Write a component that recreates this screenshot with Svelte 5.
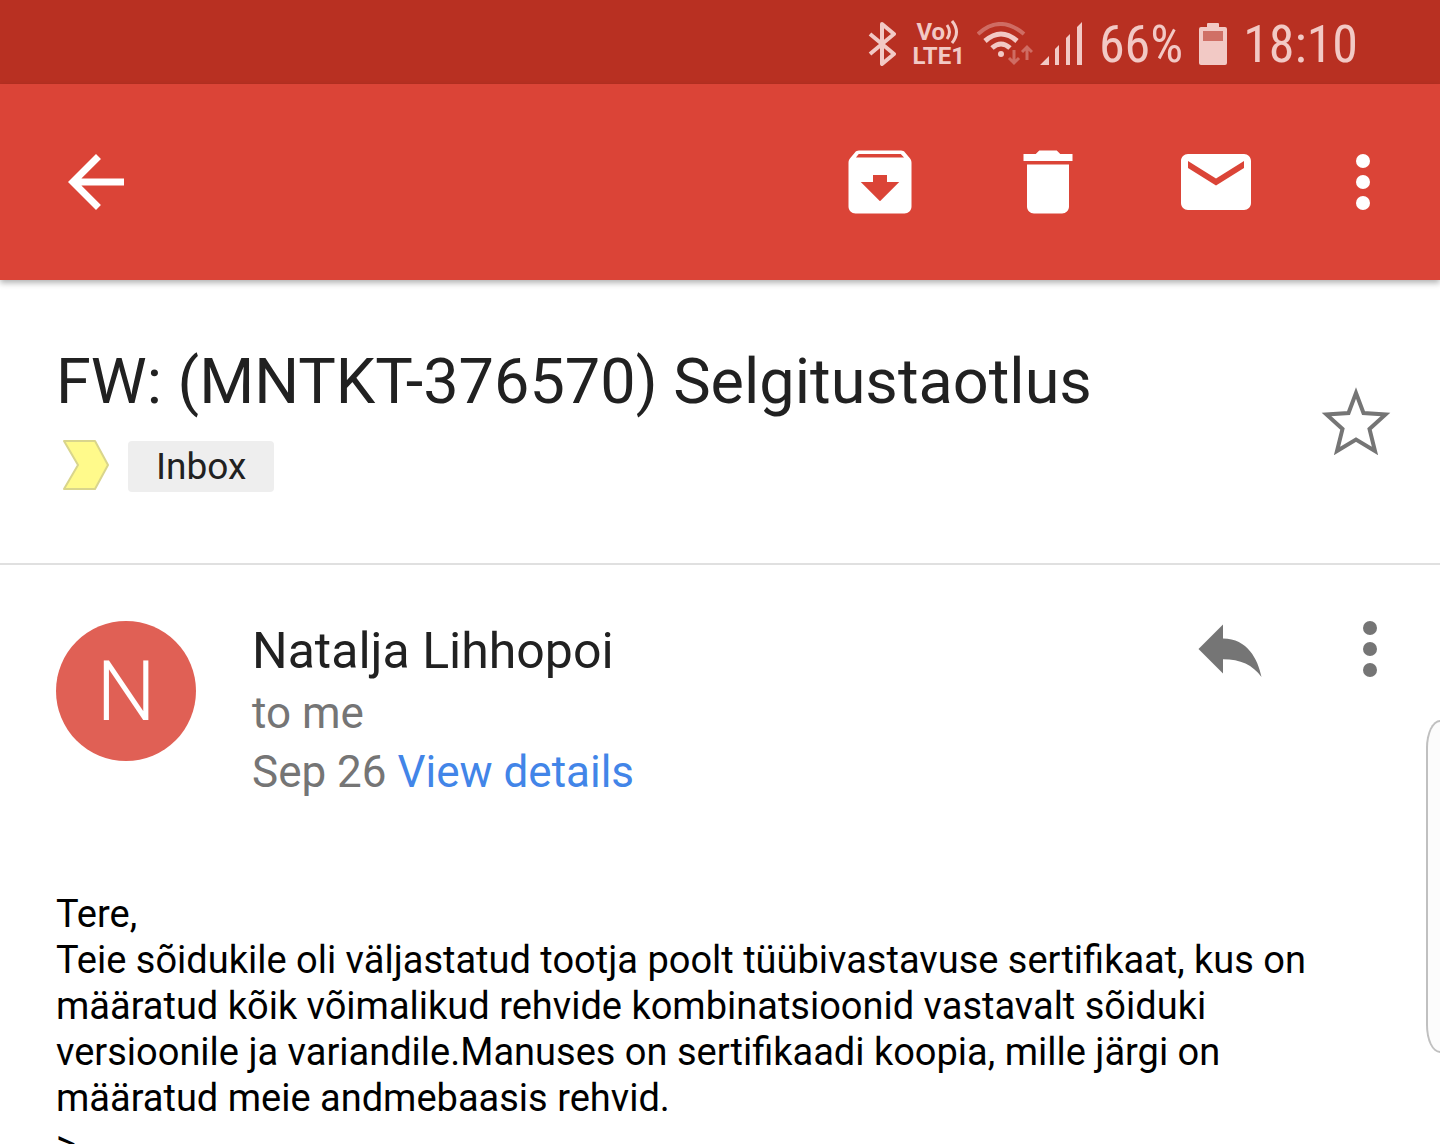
<script>
	let starred = $state(false);

	const subject = 'FW: (MNTKT-376570) Selgitustaotlus';
	const sender = 'Natalja Lihhopoi';
	const battery = 66;

	const actions = [
		{
			label: 'Archive',
			path: 'M20.54 5.23l-1.39-1.68C18.88 3.21 18.47 3 18 3H6c-.47 0-.88.21-1.16.55L3.46 5.23C3.17 5.57 3 6.02 3 6.5V19c0 1.1.9 2 2 2h14c1.1 0 2-.9 2-2V6.5c0-.48-.17-.93-.46-1.27zM12 17.5L6.5 12H10v-2h4v2h3.5L12 17.5zM5.12 5l.81-1h12l.94 1H5.12z'
		},
		{
			label: 'Delete',
			path: 'M6 19c0 1.1.9 2 2 2h8c1.1 0 2-.9 2-2V7H6v12zM19 4h-3.5l-1-1h-5l-1 1H5v2h14V4z'
		},
		{
			label: 'Mark unread',
			path: 'M20 4H4c-1.1 0-2 .9-2 2v12c0 1.1.9 2 2 2h16c1.1 0 2-.9 2-2V6c0-1.1-.9-2-2-2zm0 4l-8 5-8-5V6l8 5 8-5v2z'
		}
	];
</script>

{#snippet dots()}
	<svg viewBox="0 0 24 24" fill="currentColor">
		<circle cx="12" cy="6" r="2" />
		<circle cx="12" cy="12" r="2" />
		<circle cx="12" cy="18" r="2" />
	</svg>
{/snippet}

<div class="app">
	<div class="status-bar">
		<svg class="bluetooth" viewBox="0 0 28 44">
			<path
				d="M2 12l24 20-12 10V2l12 10L2 32"
				fill="none"
				stroke="currentColor"
				stroke-width="4"
				stroke-linejoin="round"
			/>
		</svg>
		<div class="volte">
			<div class="vo">
				<span>Vo</span>
				<svg viewBox="0 0 14 24" fill="none" stroke="currentColor" stroke-width="3">
					<path d="M2 5q5 7 0 14M7 1q9 11 0 22" />
				</svg>
			</div>
			<div>LTE1</div>
		</div>
		<div class="network">
			<svg class="wifi" viewBox="0 0 56 44" fill="none" stroke="currentColor">
				<path d="M1 12q22-20 46 0" stroke-width="4" opacity="0.4" />
				<path d="M8 19q16-14 32 0" stroke-width="5" />
				<path d="M15 26q9-8 18 0" stroke-width="5" />
				<circle cx="24" cy="32" r="3" fill="currentColor" stroke="none" />
				<path
					d="M37 28v13M32 36l5 5 5-5M50 38V25M45 30l5-5 5 5"
					stroke-width="3"
					opacity="0.4"
				/>
			</svg>
			<svg class="signal" viewBox="0 0 44 44" fill="currentColor">
				<path d="M1 43l9-9v9zM16 27l4-4v20h-4zM27 16l4-4v31h-4zM38 5l5-5v43h-5z" />
			</svg>
		</div>
		<span class="reading">{battery}%</span>
		<svg class="battery" viewBox="0 0 28 44" fill="currentColor">
			<path d="M8 5V2q0-1 1-1h10q1 0 1 1v3h6q2 0 2 2v34q0 2-2 2H2q-2 0-2-2V7q0-2 2-2z" />
			<path class="drained" d="M4 9h20v10H4z" />
		</svg>
		<time class="reading">18:10</time>
	</div>

	<header class="toolbar">
		<button class="icon-button back" aria-label="Navigate up">
			<svg viewBox="0 0 24 24" fill="currentColor">
				<path d="M20 11H7.83l5.59-5.59L12 4l-8 8 8 8 1.41-1.41L7.83 13H20v-2z" />
			</svg>
		</button>
		<div class="actions">
			{#each actions as action}
				<button class="icon-button" aria-label={action.label}>
					<svg viewBox="0 0 24 24" fill="currentColor"><path d={action.path} /></svg>
				</button>
			{/each}
		</div>
		<button class="icon-button" aria-label="More options">{@render dots()}</button>
	</header>

	<main>
		<section class="subject">
			<div class="subject-text">
				<h1>{subject}</h1>
				<div class="labels">
					<svg class="importance" viewBox="0 0 48 52">
						<path
							d="M2 1h31l13 24-13 24H2l14-24z"
							fill="#fffa8b"
							stroke="#d9d58c"
							stroke-width="2"
							stroke-linejoin="round"
						/>
					</svg>
					<span class="chip">Inbox</span>
				</div>
			</div>
			<button
				class="icon-button star"
				aria-label="Star"
				aria-pressed={starred}
				onclick={() => (starred = !starred)}
			>
				<svg viewBox="0 0 84 84">
					<path
						d="M42 17L49.5 37L71.5 38.5L55.5 53L61 75L42 63.5L23 75L28.5 53L12.5 38.5L34.5 37z"
						fill={starred ? 'currentColor' : 'none'}
						stroke="currentColor"
						stroke-width="4"
					/>
				</svg>
			</button>
		</section>

		<article>
			<div class="message-head">
				<div class="avatar">N</div>
				<div class="details">
					<div class="sender">{sender}</div>
					<div class="meta">to me</div>
					<div class="meta">Sep 26 <a href="#details">View details</a></div>
				</div>
				<div class="message-actions">
					<button class="icon-button" aria-label="Reply">
						<svg viewBox="0 0 24 24" fill="currentColor">
							<path d="M10 9V5l-7 7 7 7v-4.1c5 0 8.5 1.6 11 5.1-1-5-4-11-11-11z" />
						</svg>
					</button>
					<button class="icon-button" aria-label="Message options">{@render dots()}</button>
				</div>
			</div>
			<div class="body">
				<p>Tere,</p>
				<p>
					Teie sõidukile oli väljastatud tootja poolt tüübivastavuse sertifikaat, kus on määratud
					kõik võimalikud rehvide kombinatsioonid vastavalt sõiduki versioonile ja
					variandile.Manuses on sertifikaadi koopia, mille järgi on määratud meie andmebaasis
					rehvid.
				</p>
				<p>&gt;</p>
			</div>
		</article>
	</main>

	<div class="edge-handle"></div>
</div>

<style>
	:global(body) {
		margin: 0;
		background: #fff;
	}

	.app {
		position: relative;
		display: flex;
		flex-direction: column;
		height: 100vh;
		overflow: hidden;
		font-family: Roboto, sans-serif;
		color: #212121;
	}

	svg {
		display: block;
		flex: none;
	}

	.status-bar {
		display: flex;
		flex: none;
		align-items: center;
		justify-content: flex-end;
		gap: 16px;
		height: 84px;
		padding: 4px 82px 0 0;
		box-sizing: border-box;
		background: #b83022;
		color: #f2c9c5;
	}

	.bluetooth,
	.battery {
		width: 28px;
		height: 44px;
	}

	.drained {
		fill: #d07066;
	}

	.volte {
		font-size: 24px;
		font-weight: 700;
		line-height: 24px;
	}

	.vo {
		display: flex;
		align-items: center;
		padding-left: 4px;
	}

	.vo svg {
		width: 14px;
		height: 24px;
	}

	.network {
		display: flex;
		gap: 6px;
		margin-left: -4px;
	}

	.wifi {
		width: 56px;
		height: 44px;
	}

	.signal {
		width: 44px;
		height: 44px;
	}

	.reading {
		padding-top: 2px;
		font-family: 'Roboto Condensed', 'Liberation Sans Narrow', Roboto, sans-serif;
		font-size: 52px;
		line-height: 64px;
	}

	.toolbar {
		position: relative;
		display: flex;
		flex: none;
		align-items: center;
		height: 196px;
		padding: 0 35px 0 54px;
		box-sizing: border-box;
		background: #db4437;
		color: #fff;
		box-shadow: 0 3px 6px rgba(0, 0, 0, 0.3);
	}

	.icon-button {
		flex: none;
		width: 84px;
		height: 84px;
		padding: 0;
		border: none;
		background: none;
		color: inherit;
		cursor: pointer;
	}

	.icon-button svg {
		width: 84px;
		height: 84px;
	}

	.back {
		margin-right: auto;
	}

	.actions {
		display: flex;
		gap: 84px;
		margin-right: 63px;
	}

	main {
		flex: 1;
		min-height: 0;
		overflow: hidden;
	}

	.subject {
		display: flex;
		align-items: center;
		justify-content: space-between;
		padding: 64px 42px 71px 56px;
		border-bottom: 2px solid #e0e0e0;
	}

	h1 {
		margin: 0;
		font-size: 63px;
		font-weight: 400;
		line-height: 76px;
	}

	.labels {
		display: flex;
		align-items: center;
		gap: 18px;
		margin-top: 20px;
		padding-left: 6px;
	}

	.importance {
		width: 48px;
		height: 52px;
	}

	.chip {
		padding: 0 28px;
		border-radius: 4px;
		background: #eee;
		font-size: 37px;
		line-height: 51px;
	}

	.star,
	.message-actions {
		color: #757575;
	}

	article {
		padding: 56px 28px 0 56px;
	}

	.message-head {
		display: flex;
		align-items: flex-start;
	}

	.avatar {
		flex: none;
		width: 140px;
		height: 140px;
		border-radius: 50%;
		background: #e06055;
		color: #fff;
		font-size: 84px;
		font-weight: 300;
		line-height: 142px;
		text-align: center;
	}

	.details {
		flex: 1;
		margin-left: 56px;
	}

	.sender {
		margin-bottom: 3px;
		font-size: 50px;
		line-height: 60px;
	}

	.meta {
		color: #757575;
		font-size: 44px;
		line-height: 59px;
	}

	.meta a {
		color: #4285e8;
		text-decoration: none;
	}

	.message-actions {
		display: flex;
		gap: 56px;
		margin-top: -14px;
	}

	.body {
		margin-top: 89px;
		padding-right: 56px;
		color: #000;
		font-size: 38px;
		line-height: 46px;
	}

	p {
		margin: 0;
	}

	.edge-handle {
		position: absolute;
		top: 720px;
		right: 0;
		width: 14px;
		height: 333px;
		box-sizing: border-box;
		border: 2px solid #c0c0c0;
		border-right: none;
		border-radius: 14px 0 0 14px / 28px 0 0 28px;
		background: #fcfcfc;
	}
</style>
